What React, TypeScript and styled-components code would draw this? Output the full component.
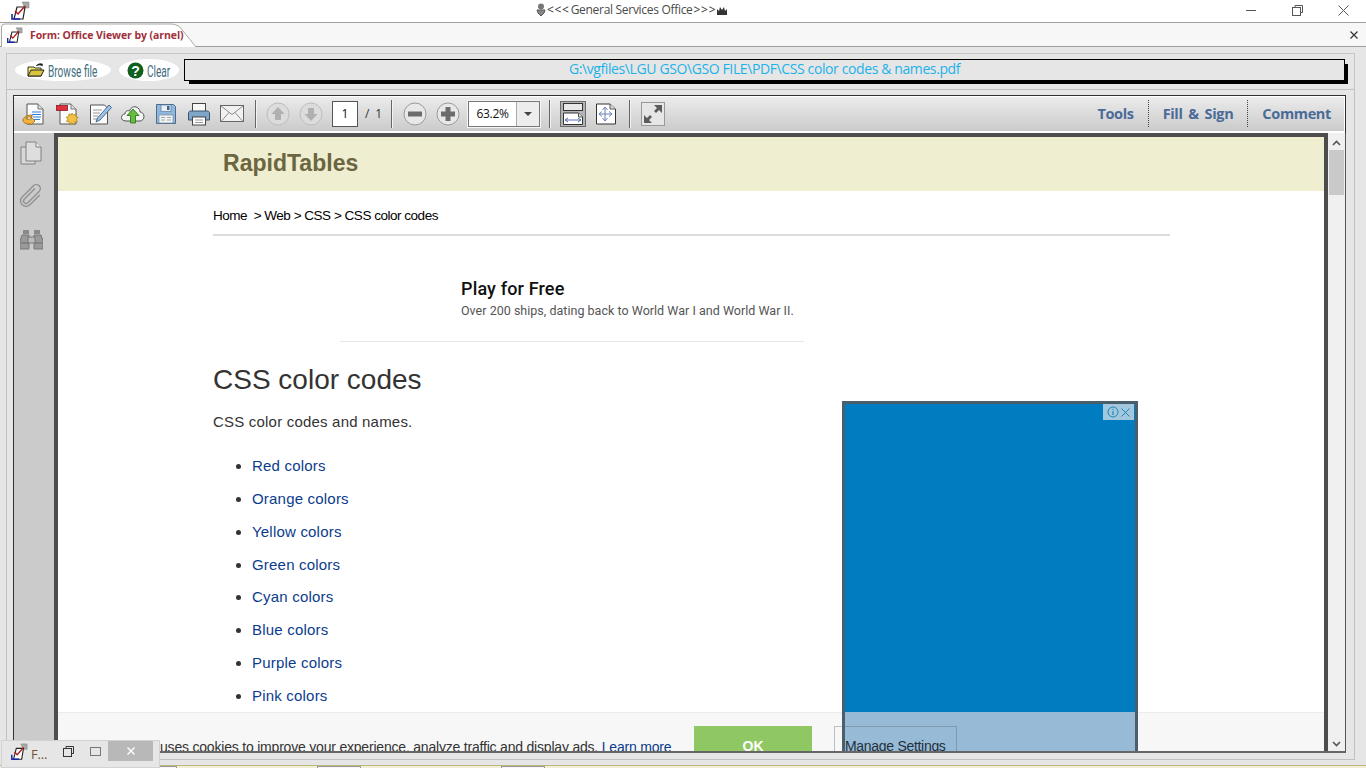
import React from "react";
import styled, { createGlobalStyle } from "styled-components";

const Global = createGlobalStyle`
  html, body { margin: 0; padding: 0; overflow: hidden; background: #e6e6e6; }
  * { box-sizing: border-box; }
`;

const Screen = styled.div`
  width: 1366px; height: 768px; position: relative; overflow: hidden;
  display: flex; flex-direction: column; background: #e6e6e6;
  font-family: "Liberation Sans", Arial, sans-serif;
`;

const TitleBar = styled.div`
  height: 23px; flex: none; background: #fff; border-bottom: 1px solid #a0a0a0;
  display: grid; grid-template-columns: 526px auto 1fr; align-items: center; padding-left: 10px;
`;
const TitleCenter = styled.div`
  display: flex; align-items: center; gap: 1px;
  font: 12px/20px "Open Sans", sans-serif; color: #4a4a4a; letter-spacing: -0.3px; padding-bottom: 2px;
`;
const TitleArrows = styled.span`
  letter-spacing: 0.7px; color: #333;
`;
const WinButtons = styled.div`
  justify-self: end; display: flex; align-items: center; height: 22px;
`;
const WinBtn = styled.div`
  width: 46px; height: 22px; display: flex; align-items: center; justify-content: center; padding-bottom: 2px;
`;

const TabStrip = styled.div`
  height: 24px; flex: none; background: #f7f7f7; border-bottom: 1px solid #9c9c9c;
  display: flex; justify-content: space-between; align-items: flex-end; padding-left: 1px; padding-right: 8px;
`;
const Tab = styled.div`
  position: relative; width: 196px; height: 24px; margin-bottom: -1px;
  display: flex; align-items: center; gap: 6px; padding-left: 5px;
  font: bold 10.5px "Open Sans", sans-serif; color: #a0303a; letter-spacing: -0.08px;
`;
const TabShape = styled.svg`
  position: absolute; left: 0; top: 0; width: 196px; height: 24px;
`;
const TabContent = styled.span`
  position: relative; display: flex; align-items: center; gap: 7px;
`;
const TabClose = styled.div`
  height: 23px; display: flex; align-items: center;
`;

const Body = styled.div`
  flex: 1; display: flex; flex-direction: column; padding: 6px 11px 0 6px; min-height: 0;
`;
const TopPanel = styled.div`
  height: 37px; flex: none; border: 1px solid #c6c6c6; border-bottom-color: #c0c0c0;
  display: flex; padding: 5px 9px 0 8px; align-items: flex-start;
`;
const Pill = styled.div<{ $w: number; $ml?: number }>`
  width: ${p => p.$w}px; height: 22px; margin-left: ${p => p.$ml ?? 0}px; flex: none;
  background: #fff; border-radius: 50%;
  display: flex; align-items: center; justify-content: center; gap: 3px;
`;
const PillLabel = styled.span<{ $w: number }>`
  display: inline-block; width: ${p => p.$w}px; white-space: nowrap; margin-top: 2px;
  font: 16px "Roboto", sans-serif; color: #3f6e80; transform: scaleX(0.63); transform-origin: left center;
`;
const PathBox = styled.div`
  width: 1161px; height: 22px; margin-left: 5px; flex: none; padding-bottom: 3px;
  border: 1px solid #000; box-shadow: 4px 4px 0 -1px #000; background: #e6e6e6;
  display: flex; align-items: center; justify-content: center;
  font: 14px "Open Sans", sans-serif; color: #1cb2ea; letter-spacing: -0.39px;
`;

const ViewerPanel = styled.div`
  height: 670px; flex: none; margin-top: 0; border: 1px solid #c0c0c0; border-top: 0;
  padding: 5px 8px 0 6px;
`;
const Toolbar = styled.div`
  height: 38px; display: flex; align-items: center; padding: 0 14px 2px 3px;
  background: linear-gradient(#ececec, #c9c9c9);
  border: 1px solid #2e2e2e; border-bottom: 0;
  box-shadow: inset 0 1px 0 #fff, inset 0 -2px 0 #fff, inset -1px 0 0 #fff;
`;
const IconBtn = styled.div`
  width: 33px; height: 33px; flex: none; display: flex; align-items: center; justify-content: center;
`;
const Sep = styled.div<{ $ml: number; $mr: number }>`
  width: 1px; height: 28px; flex: none; background: #666; box-shadow: 1px 0 0 #f2f2f2;
  margin: 0 ${p => p.$mr}px 0 ${p => p.$ml}px;
`;
const PageInput = styled.div`
  width: 26px; height: 26px; margin-left: 5px; flex: none; background: #fff; border: 1px solid #555;
  display: flex; align-items: center; justify-content: center; font: 12px "Open Sans", sans-serif; color: #111;
`;
const PageTotal = styled.div`
  width: 17px; margin-left: 7px; flex: none; font: 12px "Open Sans", sans-serif; color: #333;
  display: flex; justify-content: space-between;
`;
const ZoomCombo = styled.div`
  width: 72px; height: 26px; margin-left: 4px; flex: none; display: flex;
  border: 1px solid #777; background: #fff; outline: 1px solid #f5f5f5;
`;
const ZoomValue = styled.div`
  width: 48px; border-right: 1px solid #aaa; display: flex; align-items: center; justify-content: center;
  font: 12px "Open Sans", sans-serif; color: #111; letter-spacing: -0.3px;
`;
const ZoomArrow = styled.div`
  flex: 1; background: #ededed; display: flex; align-items: center; justify-content: center;
  &::after { content: ""; border-left: 4px solid transparent; border-right: 4px solid transparent; border-top: 4px solid #444; }
`;
const ViewBtn = styled.div<{ $active?: boolean; $ml?: number; $size?: number }>`
  width: ${p => p.$size ?? 26}px; height: 26px; margin-left: ${p => p.$ml ?? 0}px; flex: none;
  display: flex; align-items: center; justify-content: center;
  background: ${p => (p.$active ? "#b4b4b4" : "transparent")};
  border: ${p => (p.$active ? "1px solid #6c6c6c" : "0")};
`;
const ToolLinks = styled.div`
  margin-left: auto; display: flex; align-items: center; gap: 14px;
`;
const ToolLink = styled.div`
  font: bold 14.5px "Open Sans", sans-serif; color: #4a6b97; letter-spacing: -0.35px; word-spacing: 2.4px;
`;
const DotSep = styled.div`
  width: 1px; height: 27px; border-left: 1px dotted #444;
`;

const Viewer = styled.div`
  height: 620px; display: flex; border-left: 1px solid #333; border-right: 1px solid #555;
  border-bottom: 2px solid #666;
`;
const Side = styled.div`
  width: 40px; flex: none; background: #cbcbcb; display: flex; flex-direction: column; align-items: center;
  padding: 7px 6px 0 0; gap: 17px;
`;
const SideIcon = styled.div`
  height: 26px; display: flex; align-items: center; justify-content: center;
`;
const PageFrame = styled.div`
  width: 1274px; flex: none; border: 4px solid #4d4d4d; border-bottom: 0; background: #fff;
  position: relative; overflow: hidden; color: #333;
`;
const Scrollbar = styled.div`
  flex: 1; background: #f0f0f0; display: flex; flex-direction: column; align-items: center; position: relative;
`;
const ScrollArrow = styled.div`
  height: 17px; display: flex; align-items: center; justify-content: center; flex: none; width: 100%; padding-top: 3px;
`;
const Thumb = styled.div`
  width: 15px; height: 45px; background: #c9c9c9; flex: none;
`;
const Spacer = styled.div`flex: 1;`;

const Banner = styled.div`
  height: 54px; background: #efeed1; padding: 0 0 2px 165px;
  display: flex; align-items: center;
  font: bold 23px "Liberation Sans", sans-serif; color: #6b6540; letter-spacing: 0.02px;
`;
const Main = styled.div`
  margin-left: 155px; width: 957px;
`;
const Crumb = styled.div`
  margin-top: 17px; height: 16px; font: 13.5px/16px "Liberation Sans", sans-serif; color: #000; letter-spacing: -0.48px; white-space: pre;
`;
const Rule = styled.div`
  margin-top: 10px; height: 2px; background: #dcdcdc;
`;
const AdTitle = styled.div`
  margin: 43px 0 0 248px; height: 20px; font: 500 18px/20px "Roboto", sans-serif; color: #111; letter-spacing: 0.15px;
`;
const AdText = styled.div`
  margin: 4px 0 0 248px; height: 16px; font: 12.5px/16px "Roboto", sans-serif; color: #555; letter-spacing: 0.02px;
`;
const AdRule = styled.div`
  margin: 22px 0 0 127px; width: 464px; height: 1px; background: #e6e6e6;
`;
const Heading = styled.h1`
  margin: 21px 0 0; height: 34px; font: 400 28px/34px "Liberation Sans", sans-serif; color: #333;
`;
const Intro = styled.p`
  margin: 15px 0 0; height: 20px; font: 15px/20px "Liberation Sans", sans-serif; color: #333; letter-spacing: 0.2px;
`;
const ColorList = styled.ul`
  margin: 17px 0 0; padding: 0 0 0 39px; list-style: disc;
`;
const ColorItem = styled.li`
  height: 32.86px; line-height: 20px; padding-top: 7px; font-size: 15px; color: #333;
  a { color: #0b3c8c; text-decoration: none; letter-spacing: 0.2px; }
`;
const AdBox = styled.div`
  position: absolute; left: 784px; top: 264px; width: 296px; height: 360px; z-index: 2;
  background: #007dc1; border: 3px solid #4b5e6b;
`;
const AdFade = styled.div`
  position: absolute; left: 0; right: 0; top: 308px; bottom: 0; background: #97bad6;
`;
const AdChoice = styled.div`
  position: absolute; right: 1px; top: 0; width: 31px; height: 16px; background: #a3c8de;
  display: flex; align-items: center; justify-content: center; gap: 2px;
`;
const CookieBar = styled.div`
  position: absolute; left: 0; right: 0; top: 575px; height: 50px;
  background: #f7f7f7; border-top: 1px solid #ececec;
`;
const CookieText = styled.div`
  position: absolute; left: 102px; top: 25px; font: 14px/18px "Liberation Sans", sans-serif; color: #333;
  white-space: nowrap; letter-spacing: -0.2px;
  a { color: #0b3c8c; }
`;
const OkBtn = styled.div`
  position: absolute; left: 636px; top: 13px; width: 118px; height: 40px; background: #8fc862;
  color: #fff; font: bold 14px/40px "Liberation Sans", sans-serif; text-align: center;
`;
const ManageBtn = styled.div`
  position: absolute; left: 776px; top: 13px; width: 123px; height: 40px; z-index: 3;
  border: 1px solid rgba(90, 110, 125, 0.4);
  font: 14px/38px "Liberation Sans", sans-serif; color: #22303c; padding-left: 10px; white-space: nowrap; letter-spacing: -0.3px;
`;

const BottomStrip = styled.div`
  position: absolute; left: 0; right: 0; bottom: 0; height: 3px; background: #f1efd6; border-top: 1px solid #bcb67c;
  display: flex; padding-left: 133px; gap: 140px;
`;
const StripBox = styled.div`
  width: 44px; height: 2px; border: 1px solid #999; border-bottom: 0; margin-top: 0; background: #f6f6f6;
`;
const Minimized = styled.div`
  position: absolute; left: 1px; top: 740px; width: 159px; height: 28px; background: #e6e6e6;
  border: 1px solid #d2d2d2; display: flex; align-items: flex-start; padding: 0 6px 0 8px;
`;
const MinAppIcon = styled.div`
  margin-top: 2px;
`;
const MinLabel = styled.div`
  height: 26px; margin-left: 3px; width: 23px; font: 13px/26px "Open Sans", sans-serif; color: #6e5236; letter-spacing: -0.2px;
`;
const MinIcon = styled.div<{ $ml: number }>`
  width: 20px; height: 20px; margin-left: ${p => p.$ml}px; display: flex; align-items: center; justify-content: center;
`;
const MinClose = styled.div`
  width: 45px; height: 20px; margin-left: 3px; background: #b8b8b8; display: flex; align-items: center; justify-content: center;
`;

const Glyph = styled.svg`
  display: block; flex: none;
`;

const AppIcon = ({ s = 20 }: { s?: number }) => (
  <Glyph width={s} height={s} viewBox="0 0 20 20">
    <path d="M12 1h7v6h-4z" fill="#a8a8a8" stroke="#888" strokeWidth=".6" />
    <path d="M7 6h8l-2 12H4z" fill="#fff" stroke="#222" strokeWidth="1.2" />
    <path d="M5 10l3 3 7-8" fill="none" stroke="#b01c20" strokeWidth="1.5" />
    <path d="M2 13v5h8" fill="none" stroke="#1624b0" strokeWidth="1.6" />
  </Glyph>
);
const SheetOutline = "M5 2h11l5 5v15H5z";

const ExportPdf = () => (
  <Glyph width="24" height="24" viewBox="0 0 24 24">
    <path d={SheetOutline} fill="#fbfbfb" stroke="#555" />
    <path d="M16 2v5h5" fill="#ddd" stroke="#777" />
    <path d="M10 10h9M10 12.500h9M11 15h8M12 17.500h6" stroke="#2f7fe0" strokeWidth="1.2" />
    <path d="M10 13C4 13 1 16 1 18c0 3 3 4 6 4 2 0 2-1 2 1l4-4-4-4v2c-2 0-5 1-5-1 0-1 2-1 6-1z" fill="#f1b33c" stroke="#9a6a14" strokeWidth=".8" />
  </Glyph>
);
const CreatePdf = () => (
  <Glyph width="24" height="24" viewBox="0 0 24 24">
    <path d={SheetOutline} fill="#fbfbfb" stroke="#555" />
    <path d="M16 2v5h5" fill="#ddd" stroke="#777" />
    <rect x="1.500" y="3.500" width="11" height="5" fill="#e03040" stroke="#8a1a24" strokeWidth=".8" />
    <path d="M17 11l1.500 2 2.500-1-.2 2.600 2.400 1-1.800 1.900 1 2.400-2.600.1-1 2.500-2-1.600-2.200 1.400-.6-2.500-2.600-.4 1.400-2.200-1.600-2 2.500-.7.2-2.600 2.400 1z" fill="#f1c045" stroke="#a5801c" strokeWidth=".7" />
  </Glyph>
);
const EditPdf = () => (
  <Glyph width="24" height="24" viewBox="0 0 24 24">
    <path d="M2.500 3h14l3 3v16h-17z" fill="#fbfbfb" stroke="#555" />
    <path d="M5 8h9M5 11h7M5 14h5M5 17h4" stroke="#999" />
    <path d="M21 3l2.500 2.500L12 18l-4 2 1.500-4z" fill="#9ec3e8" stroke="#3d5f86" strokeWidth=".9" />
  </Glyph>
);
const Upload = () => (
  <Glyph width="24" height="24" viewBox="0 0 24 24">
    <path d="M5 19c-3 0-4.500-1.500-4.500-3.500S2 12 4 12c0-3 3-4 4.500-3C9.500 6 12 4 15 5c3 1 4 3 4 5 2 0 4 2 4 4.500S21 19 19 19z" fill="#f4f4f4" stroke="#555" />
    <path d="M12 7l6 6.500h-3.500V21h-5v-7.500H6z" fill="#68bc3e" stroke="#2c7a24" strokeWidth=".9" />
  </Glyph>
);
const Floppy = () => (
  <Glyph width="24" height="24" viewBox="0 0 24 24">
    <path d="M2.500 2.500h17l2 2v17h-19z" fill="#8fb6dc" stroke="#4a6a8e" />
    <rect x="7" y="3" width="10" height="6.500" fill="#e8eef4" stroke="#5a7a9a" strokeWidth=".7" />
    <rect x="13" y="4" width="2.500" height="4" fill="#3f6288" />
    <rect x="5" y="13" width="14" height="8" fill="#f3f3f3" stroke="#7a8a9a" strokeWidth=".7" />
    <path d="M7 15.500h4M13 15.500h4M7 18h4M13 18h4" stroke="#9aa" />
  </Glyph>
);
const Printer = () => (
  <Glyph width="24" height="24" viewBox="0 0 24 24">
    <rect x="5.500" y="1.500" width="13" height="8" fill="#f6f6f6" stroke="#444" />
    <path d="M3.500 9h17c1 0 2 1 2 2v7h-21v-7c0-1 1-2 2-2z" fill="#7fa5c8" stroke="#3c5470" />
    <rect x="5.500" y="15" width="13" height="8" fill="#fff" stroke="#444" />
    <path d="M8 18h8M8 20.500h8" stroke="#999" />
  </Glyph>
);
const Mail = () => (
  <Glyph width="24" height="18" viewBox="0 0 24 18">
    <rect x=".5" y=".5" width="23" height="16" fill="#f1f1f1" stroke="#666" />
    <path d="M1 1l11 8.500L23 1M1 16.500l8-9M23 16.500l-8-9" fill="none" stroke="#8c8c8c" />
  </Glyph>
);
const RoundArrow = ({ down }: { down?: boolean }) => (
  <Glyph width="24" height="24" viewBox="0 0 24 24">
    <circle cx="12" cy="12" r="11" fill="#dcdcdc" stroke="#bdbdbd" />
    <g transform={down ? "rotate(180 12 12)" : undefined}>
      <path d="M12 5l6.500 7H15v6H9v-6H5.500z" fill="#b0b0b0" />
    </g>
  </Glyph>
);
const RoundZoom = ({ plus }: { plus?: boolean }) => (
  <Glyph width="24" height="24" viewBox="0 0 24 24">
    <circle cx="12" cy="12" r="11" fill="#e8e8e8" stroke="#9a9a9a" />
    <rect x="5" y="9.500" width="14" height="5" fill="#6c6c6c" />
    {plus && <rect x="9.500" y="5" width="5" height="14" fill="#6c6c6c" />}
  </Glyph>
);
const FitWidth = () => (
  <Glyph width="22" height="22" viewBox="0 0 22 22">
    <rect x="1.500" y=".500" width="19" height="7" fill="#e8e8e8" stroke="#333" />
    <path d="M1.500 10h15l4 4v7.500h-19z" fill="#fff" stroke="#333" />
    <path d="M16.500 10v4h4" fill="#ddd" stroke="#555" />
    <path d="M3 17h16M3 17l3-2M3 17l3 2M19 17l-3-2M19 17l-3 2" stroke="#5670ad" />
  </Glyph>
);
const FitPage = () => (
  <Glyph width="20" height="22" viewBox="0 0 20 22">
    <path d="M.5 1h13.500l5.500 5v15H.5z" fill="#fff" stroke="#333" />
    <path d="M14 1v5h5.500" fill="#ddd" stroke="#555" />
    <path d="M9 4v14M3 11h13M9 4l-2.500 3M9 4l2.500 3M9 18l-2.500-3M9 18l2.500-3M3 11l3-2.500M3 11l3 2.500M16 11l-3-2.500M16 11l-3 2.500" stroke="#6a80ba" fill="none" />
  </Glyph>
);
const Expand = () => (
  <Glyph width="24" height="24" viewBox="0 0 24 24">
    <rect x=".5" y=".5" width="23" height="23" fill="#e6e6e6" stroke="#999" />
    <path d="M21 3v8l-3-3-3 3-2-2 3-3-3-3zM3 21v-8l3 3 3-3 2 2-3 3 3 3z" fill="#5c5c5c" />
  </Glyph>
);
const Folder = () => (
  <Glyph width="18" height="16" viewBox="0 0 18 16">
    <path d="M1 5h6l1 1h6v8H1z" fill="#f5ea70" stroke="#333" />
    <path d="M1 14l3-6h13l-3 6z" fill="#d8c640" stroke="#222" />
    <path d="M9 4c1-2 3-3 5-2l-1-1 3 1-1 3v-1c-2-1-4-1-5 0z" fill="#222" />
  </Glyph>
);
const Help = () => (
  <Glyph width="17" height="17" viewBox="0 0 17 17">
    <circle cx="8.500" cy="8.500" r="8" fill="#0f5f1e" />
    <text x="8.500" y="13.500" fontSize="14" fontWeight="700" fontFamily="Liberation Sans" fill="#fff" textAnchor="middle">?</text>
  </Glyph>
);
const Pages = () => (
  <Glyph width="22" height="24" viewBox="0 0 22 24">
    <path d="M1 6h14v17H1z" fill="#d8d8d8" stroke="#808080" />
    <path d="M6 1h10l5 5v14H6z" fill="#dedede" stroke="#808080" />
    <path d="M16 1v5h5" fill="#f0f0f0" stroke="#808080" />
  </Glyph>
);
const Clip = () => (
  <Glyph width="24" height="26" viewBox="0 0 24 26">
    <g transform="rotate(45 12 13)">
      <path d="M9.500 5v15a2.500 2.500 0 0 0 5 0V4a4 4 0 0 0-8 0v16a5.500 5.500 0 0 0 11 0V6" fill="none" stroke="#929292" strokeWidth="1.4" />
    </g>
  </Glyph>
);
const Binoculars = () => (
  <Glyph width="23" height="21" viewBox="0 0 23 21">
    <rect x="3" y="1" width="6" height="4" fill="#8a8a8a" />
    <rect x="14" y="1" width="6" height="4" fill="#8a8a8a" />
    <path d="M2 6h7v14H0v-8zM21 6h-7v14h9v-8z" fill="#9a9a9a" stroke="#777" />
    <rect x="8" y="8" width="7" height="6" fill="#bcbcbc" stroke="#777" />
    <path d="M1 14h7M15 14h7" stroke="#6e6e6e" />
  </Glyph>
);
const Chevron = ({ down }: { down?: boolean }) => (
  <Glyph width="9" height="6" viewBox="0 0 9 6">
    <path d={down ? "M1 1l3.500 3.500L8 1" : "M1 5l3.500-3.500L8 5"} fill="none" stroke="#555" strokeWidth="1.6" />
  </Glyph>
);
const Cross = ({ s, c, w = 1 }: { s: number; c: string; w?: number }) => (
  <Glyph width={s} height={s} viewBox={`0 0 ${s} ${s}`}>
    <path d={`M.5 .5L${s - .5} ${s - .5}M${s - .5} .5L.5 ${s - .5}`} stroke={c} strokeWidth={w} />
  </Glyph>
);
const RestoreIcon = ({ c = "#444" }: { c?: string }) => (
  <Glyph width="11" height="11" viewBox="0 0 11 11">
    <path d="M3 2.500V.5h7.500v7H8.500" fill="none" stroke={c} />
    <rect x=".5" y="2.500" width="8" height="8" fill="none" stroke={c} />
  </Glyph>
);

const links = ["Red colors", "Orange colors", "Yellow colors", "Green colors", "Cyan colors", "Blue colors", "Purple colors", "Pink colors"];

export default function App() {
  return (
    <Screen>
      <Global />
      <TitleBar>
        <div><AppIcon /></div>
        <TitleCenter>
          <Glyph width="10" height="14" viewBox="0 0 10 14">
            <circle cx="5" cy="3.500" r="3" fill="#777" />
            <path d="M1 7h8l-1 3-3 3-3-3z" fill="#888" stroke="#555" />
          </Glyph>
          <TitleArrows>{"<<<"}</TitleArrows>General Services Office<TitleArrows>{">>>"}</TitleArrows>
          <Glyph width="10" height="9" viewBox="0 0 10 9">
            <path d="M0 9V3l2 2 1-4 2 3 2-3 1 4 2-2v6z" fill="#333" />
          </Glyph>
        </TitleCenter>
        <WinButtons>
          <WinBtn><Glyph width="10" height="1" viewBox="0 0 10 1"><rect width="10" height="1" fill="#555" /></Glyph></WinBtn>
          <WinBtn><RestoreIcon c="#555" /></WinBtn>
          <WinBtn><Cross s={11} c="#555" /></WinBtn>
        </WinButtons>
      </TitleBar>

      <TabStrip>
        <Tab>
          <TabShape viewBox="0 0 196 24">
            <path d="M.5 24V4Q.5 1 4 1H170Q178 1 182 8L195 24" fill="#fff" stroke="#a9a9a0" />
          </TabShape>
          <TabContent><AppIcon s={17} />Form: Office Viewer by (arnel)</TabContent>
        </Tab>
        <TabClose><Cross s={8} c="#333" w={1.2} /></TabClose>
      </TabStrip>

      <Body>
        <TopPanel>
          <Pill $w={96}>
            <Folder />
            <PillLabel $w={51}>Browse file</PillLabel>
          </Pill>
          <Pill $w={60} $ml={8}>
            <Help />
            <PillLabel $w={24}>Clear</PillLabel>
          </Pill>
          <PathBox>{"G:\\vgfiles\\LGU GSO\\GSO FILE\\PDF\\CSS color codes & names.pdf"}</PathBox>
        </TopPanel>

        <ViewerPanel>
          <Toolbar>
            <IconBtn><ExportPdf /></IconBtn>
            <IconBtn><CreatePdf /></IconBtn>
            <IconBtn><EditPdf /></IconBtn>
            <IconBtn><Upload /></IconBtn>
            <IconBtn><Floppy /></IconBtn>
            <IconBtn><Printer /></IconBtn>
            <IconBtn><Mail /></IconBtn>
            <Sep $ml={7} $mr={5} />
            <IconBtn><RoundArrow /></IconBtn>
            <IconBtn><RoundArrow down /></IconBtn>
            <PageInput>1</PageInput>
            <PageTotal><span>/</span><span>1</span></PageTotal>
            <Sep $ml={9} $mr={6} />
            <IconBtn><RoundZoom /></IconBtn>
            <IconBtn><RoundZoom plus /></IconBtn>
            <ZoomCombo><ZoomValue>63.2%</ZoomValue><ZoomArrow /></ZoomCombo>
            <Sep $ml={9} $mr={10} />
            <ViewBtn $active><FitWidth /></ViewBtn>
            <ViewBtn $ml={7}><FitPage /></ViewBtn>
            <Sep $ml={10} $mr={11} />
            <ViewBtn $size={24}><Expand /></ViewBtn>
            <ToolLinks>
              <ToolLink>Tools</ToolLink>
              <DotSep />
              <ToolLink>Fill &amp; Sign</ToolLink>
              <DotSep />
              <ToolLink>Comment</ToolLink>
            </ToolLinks>
          </Toolbar>

          <Viewer>
            <Side>
              <SideIcon><Pages /></SideIcon>
              <SideIcon><Clip /></SideIcon>
              <SideIcon><Binoculars /></SideIcon>
            </Side>
            <PageFrame>
              <Banner>RapidTables</Banner>
              <Main>
                <Crumb>{"Home  > Web > CSS > CSS color codes"}</Crumb>
                <Rule />
                <AdTitle>Play for Free</AdTitle>
                <AdText>Over 200 ships, dating back to World War I and World War II.</AdText>
                <AdRule />
                <Heading>CSS color codes</Heading>
                <Intro>CSS color codes and names.</Intro>
                <ColorList>
                  {links.map(l => <ColorItem key={l}><a href="#">{l}</a></ColorItem>)}
                </ColorList>
              </Main>
              <AdBox>
                <AdChoice>
                  <Glyph width="12" height="12" viewBox="0 0 12 12">
                    <circle cx="6" cy="6" r="5" fill="none" stroke="#1a86bb" />
                    <path d="M6 5v4M6 3v1" stroke="#1a86bb" strokeWidth="1.2" />
                  </Glyph>
                  <Cross s={9} c="#1a86bb" />
                </AdChoice>
                <AdFade />
              </AdBox>
              <CookieBar>
                <CookieText>uses cookies to improve your experience, analyze traffic and display ads. <a href="#">Learn more</a></CookieText>
                <OkBtn>OK</OkBtn>
                <ManageBtn>Manage Settings</ManageBtn>
              </CookieBar>
            </PageFrame>
            <Scrollbar>
              <ScrollArrow><Chevron /></ScrollArrow>
              <Thumb />
              <Spacer />
              <ScrollArrow><Chevron down /></ScrollArrow>
            </Scrollbar>
          </Viewer>
        </ViewerPanel>
      </Body>

      <BottomStrip>
        <StripBox />
        <StripBox />
        <StripBox />
      </BottomStrip>
      <Minimized>
        <MinAppIcon><AppIcon s={18} /></MinAppIcon>
        <MinLabel>F...</MinLabel>
        <MinIcon $ml={4}><RestoreIcon c="#333" /></MinIcon>
        <MinIcon $ml={7}><Glyph width="11" height="9" viewBox="0 0 11 9"><rect x=".5" y=".5" width="10" height="8" fill="none" stroke="#777" /></Glyph></MinIcon>
        <MinClose><Cross s={8} c="#fff" w={1.4} /></MinClose>
      </Minimized>
    </Screen>
  );
}
